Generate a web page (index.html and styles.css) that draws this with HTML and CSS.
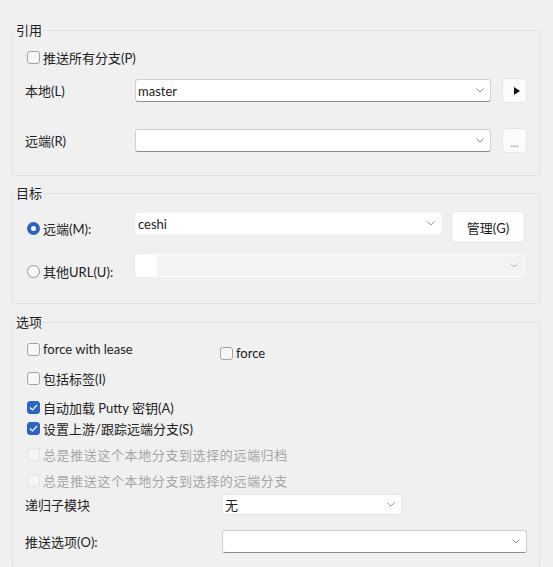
FILE: index.html
```html
<!DOCTYPE html>
<html lang="zh-CN">
<head>
    <meta charset="UTF-8">
    <meta name="viewport" content="width=device-width, initial-scale=1.0">
    <title>推送</title>
    <link rel="stylesheet" href="styles.css">
</head>
<body>
    <div class="dialog">
        <fieldset class="group">
            <legend>引用</legend>
            <div class="group-body ref-body">
                <label class="check"><span class="box"></span>推送所有分支(P)</label>
                <div class="field-row">
                    <span class="field-label">本地(L)</span>
                    <div class="combo">
                        <span class="combo-text">master</span>
                        <svg class="chevron" width="8" height="5" viewBox="0 0 8 5"><polyline points="0.5,0.5 4,4 7.5,0.5" fill="none" stroke="#8a8a8a" stroke-width="1"/></svg>
                    </div>
                    <button class="small-btn">
                        <svg width="6" height="8" viewBox="0 0 6 8"><polygon points="0,0 6,4 0,8" fill="#111"/></svg>
                    </button>
                </div>
                <div class="field-row far">
                    <span class="field-label">远端(R)</span>
                    <div class="combo">
                        <span class="combo-text"></span>
                        <svg class="chevron" width="8" height="5" viewBox="0 0 8 5"><polyline points="0.5,0.5 4,4 7.5,0.5" fill="none" stroke="#8a8a8a" stroke-width="1"/></svg>
                    </div>
                    <button class="small-btn dots">...</button>
                </div>
            </div>
        </fieldset>

        <fieldset class="group target">
            <legend>目标</legend>
            <div class="group-body target-body">
                <div class="target-row">
                    <label class="radio"><span class="dot on"></span>远端(M):</label>
                    <div class="combo plain">
                        <span class="combo-text">ceshi</span>
                        <svg class="chevron" width="8" height="5" viewBox="0 0 8 5"><polyline points="0.5,0.5 4,4 7.5,0.5" fill="none" stroke="#9a9a9a" stroke-width="1"/></svg>
                    </div>
                    <button class="manage-btn">管理(G)</button>
                </div>
                <div class="target-row url-row">
                    <label class="radio"><span class="dot"></span>其他URL(U):</label>
                    <div class="combo disabled">
                        <span class="combo-edit"></span>
                        <svg class="chevron" width="8" height="5" viewBox="0 0 8 5"><polyline points="0.5,0.5 4,4 7.5,0.5" fill="none" stroke="#b5b5b5" stroke-width="1"/></svg>
                    </div>
                </div>
            </div>
        </fieldset>

        <fieldset class="group options">
            <legend>选项</legend>
            <div class="group-body options-body">
                <div class="force-row">
                    <label class="check lease"><span class="box"></span>force with lease</label>
                    <label class="check force"><span class="box"></span>force</label>
                </div>
                <label class="check opt">
                    <span class="box"></span>包括标签(I)
                </label>
                <label class="check opt">
                    <span class="box checked"><svg width="9" height="7" viewBox="0 0 9 7"><polyline points="1,3.5 3.5,6 8,1" fill="none" stroke="#fff" stroke-width="1.2"/></svg></span>自动加载 Putty 密钥(A)
                </label>
                <label class="check opt close">
                    <span class="box checked"><svg width="9" height="7" viewBox="0 0 9 7"><polyline points="1,3.5 3.5,6 8,1" fill="none" stroke="#fff" stroke-width="1.2"/></svg></span>设置上游/跟踪远端分支(S)
                </label>
                <label class="check opt disabled">
                    <span class="box"></span>总是推送这个本地分支到选择的远端归档
                </label>
                <label class="check opt disabled">
                    <span class="box"></span>总是推送这个本地分支到选择的远端分支
                </label>
                <div class="option-row recurse">
                    <span class="option-label">递归子模块</span>
                    <div class="combo light short">
                        <span class="combo-text">无</span>
                        <svg class="chevron" width="8" height="5" viewBox="0 0 8 5"><polyline points="0.5,0.5 4,4 7.5,0.5" fill="none" stroke="#9a9a9a" stroke-width="1"/></svg>
                    </div>
                </div>
                <div class="option-row push-opts">
                    <span class="option-label">推送选项(O):</span>
                    <div class="combo wide">
                        <span class="combo-text"></span>
                        <svg class="chevron" width="8" height="5" viewBox="0 0 8 5"><polyline points="0.5,0.5 4,4 7.5,0.5" fill="none" stroke="#8a8a8a" stroke-width="1"/></svg>
                    </div>
                </div>
            </div>
        </fieldset>
    </div>
</body>
</html>
```

FILE: styles.css
```css
body {
    margin: 0;
    background: #f0f0f0;
    font-family: Lato, "Noto Sans CJK SC", sans-serif;
    font-size: 13px;
    color: #222;
}

.dialog {
    padding: 22px 13px 0 12px;
}

.group {
    margin: 0;
    padding: 0;
    border: 1px solid #e2e2e2;
    border-radius: 2px;
    min-width: 0;
}

.group legend {
    margin-left: 2px;
    padding: 0 1px;
    line-height: 16px;
    font-size: 13px;
    color: #222;
}

.group-body {
    padding: 0 12px;
}

.ref-body {
    padding-top: 11px;
    padding-bottom: 22px;
}

/* checkboxes and radios */
.check, .radio {
    display: flex;
    align-items: center;
    gap: 3px;
    height: 16px;
    padding-left: 2px;
    white-space: nowrap;
}

.box {
    width: 13px;
    height: 13px;
    box-sizing: border-box;
    border: 1px solid #a2a2a2;
    border-radius: 3px;
    background: #f7f7f7;
    display: flex;
    align-items: center;
    justify-content: center;
    flex-shrink: 0;
}

.box.checked {
    background: #2c64c6;
    border-color: #2c64c6;
}

.check.disabled {
    color: #a6a6a6;
    letter-spacing: 0.6px;
}

.check.disabled .box {
    border-color: #e2e2e2;
    background: #f5f5f5;
}

.dot {
    width: 13px;
    height: 13px;
    box-sizing: border-box;
    border: 1px solid #959595;
    border-radius: 50%;
    background: #f7f7f7;
    flex-shrink: 0;
}

.dot.on {
    border: 4px solid #2c64c6;
    background: #fff;
}

/* field rows */
.field-row {
    display: flex;
    align-items: center;
    height: 25px;
    margin-top: 13px;
}

.field-row.far {
    margin-top: 25px;
}

.field-label {
    width: 110px;
    flex-shrink: 0;
}

.field-row .combo {
    width: 356px;
}

.combo {
    height: 23px;
    box-sizing: border-box;
    background: #fff;
    border: 1px solid #cfcfcf;
    border-bottom-color: #8c8c8c;
    border-radius: 3px;
    display: flex;
    align-items: center;
    padding: 0 6px 0 2px;
}

.combo-text {
    flex: 1;
    color: #222;
}

.combo.plain {
    border-color: #f6f6f6;
}

.combo.light {
    border-color: #e6e6e6;
}

.combo.disabled {
    background: #f3f3f3;
    border-color: #fbfbfb;
    padding-left: 0;
}

.combo-edit {
    width: 21px;
    height: 100%;
    background: #fff;
    margin-right: auto;
}

.small-btn {
    width: 25px;
    height: 25px;
    margin-left: 11px;
    padding: 0 0 0 4px;
    border: 1px solid #e6e6e6;
    border-radius: 4px;
    background: #fbfbfb;
    display: flex;
    align-items: center;
    justify-content: center;
}

.small-btn.dots {
    padding: 0 0 5px 0;
    align-items: flex-end;
    font-size: 11px;
    color: #6f83aa;
    font-family: Lato, sans-serif;
    line-height: 8px;
}

/* target */
.target {
    margin-top: 9px;
}

.target-body {
    padding-top: 10px;
    padding-bottom: 24px;
}

.target-row {
    display: flex;
    align-items: flex-start;
    height: 32px;
}

.target-row .radio {
    width: 108px;
    flex-shrink: 0;
    margin-top: 9px;
}

.target-row .combo {
    width: 307px;
    margin-top: 1px;
}

.url-row {
    margin-top: 11px;
    height: 25px;
}

.url-row .combo {
    width: 390px;
    margin-top: 0;
}

.manage-btn {
    width: 74px;
    height: 32px;
    margin-left: 9px;
    border: 1px solid #e6e6e6;
    border-radius: 4px;
    background: #fdfdfd;
    font-family: Lato, "Noto Sans CJK SC", sans-serif;
    font-size: 13px;
    color: #222;
    padding: 0;
}

/* options */
.options {
    margin-top: 10px;
}

.options-body {
    padding-top: 11px;
    padding-bottom: 14px;
}

.force-row {
    display: flex;
    height: 16px;
}

.check.lease {
    width: 191px;
}

.check.force {
    margin-top: 4px;
}

.check.opt {
    margin-top: 13px;
}

.check.opt.close {
    margin-top: 5px;
}

.check.opt.disabled {
    margin-top: 10px;
}

.option-row {
    display: flex;
    align-items: center;
}

.option-label {
    width: 197px;
    flex-shrink: 0;
}

.recurse {
    margin-top: 6px;
    height: 21px;
}

.recurse .combo {
    width: 180px;
    height: 21px;
}

.push-opts {
    margin-top: 15px;
    height: 23px;
}

.combo.wide {
    width: 305px;
}
```
